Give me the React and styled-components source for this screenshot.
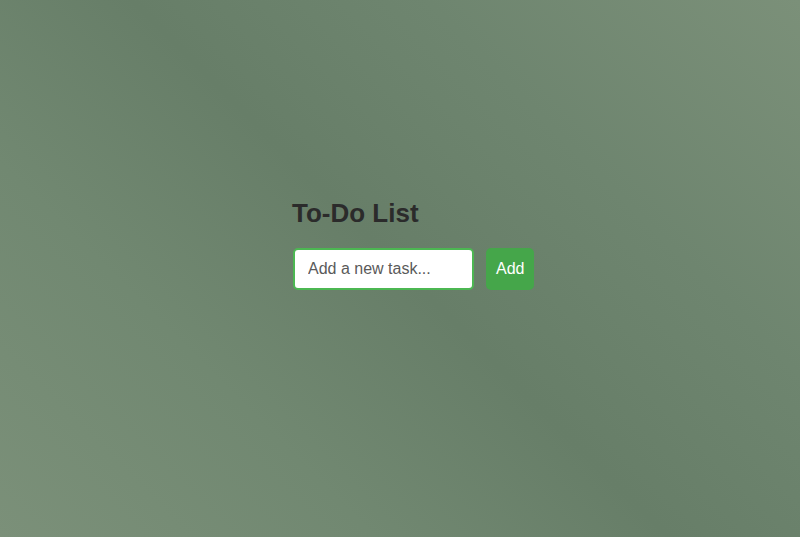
import React, { useState } from "react";
import styled, { createGlobalStyle } from "styled-components";

const GlobalStyle = createGlobalStyle`
  html, body {
    margin: 0;
    padding: 0;
    height: 100%;
  }
  body {
    font-family: "Liberation Sans", Arial, Helvetica, sans-serif;
    background: linear-gradient(45deg, #7b9079 0%, #718871 28%, #677e68 50%, #6e856f 72%, #7b9079 100%);
  }
  #root {
    height: 100%;
  }
`

const PAGE = styled.div`
  height: 100vh;
  display: flex;
  justify-content: center;
  align-items: center;
  padding-bottom: 50px;
  box-sizing: border-box;
`
const CARD = styled.div`
  width: 270px;
  padding-left: 28px;
  box-sizing: border-box;
`
const TITLE = styled.h1`
  margin: 0 0 20px -1px;
  font-size: 26px;
  font-weight: bold;
  color: #2b2b2b;
  line-height: 30px;
`
const ROW = styled.form`
  display: flex;
  align-items: center;
  gap: 12px;
`
const INPUT = styled.input`
  width: 181px;
  height: 42px;
  box-sizing: border-box;
  padding: 10px 13px;
  border: 2px solid #4cb752;
  border-radius: 5px;
  background: #ffffff;
  font-family: inherit;
  font-size: 16px;
  color: #333;
  outline: none;
  &::placeholder {
    color: #5a5a5a;
  }
`
const BUTTON = styled.button`
  height: 42px;
  padding: 0 10px;
  border: none;
  border-radius: 5px;
  background: #45a64a;
  color: #ffffff;
  font-family: inherit;
  font-size: 16px;
  cursor: pointer;
`

function App(){
    const [task, setTask] = useState("")

    return(
        <>
        <GlobalStyle />
        <PAGE>
            <CARD>
                <TITLE>To-Do List</TITLE>
                <ROW onSubmit={(e) => { e.preventDefault(); setTask("") }}>
                    <INPUT
                        value={task}
                        onChange={(e) => setTask(e.target.value)}
                        placeholder="Add a new task..."
                    />
                    <BUTTON type="submit">Add</BUTTON>
                </ROW>
            </CARD>
        </PAGE>
        </>
    )
}

export default App;
